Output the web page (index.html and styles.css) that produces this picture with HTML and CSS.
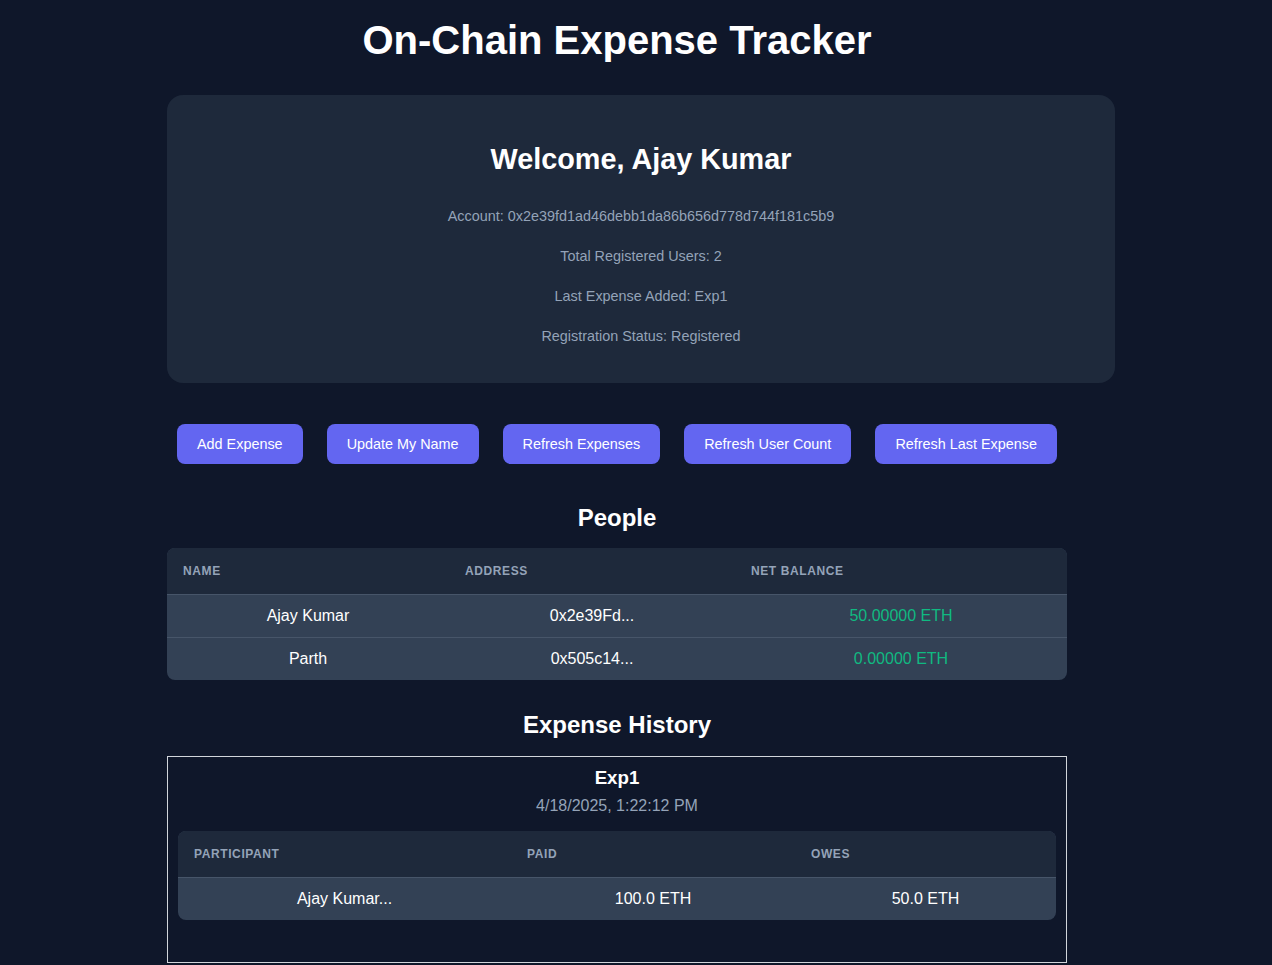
FILE: index.html
```html
<!DOCTYPE html>
<html lang="en">
<head>
<meta charset="utf-8">
<title>On-Chain Expense Tracker</title>
<link rel="stylesheet" href="styles.css">
</head>
<body>
<div class="app">
  <h1 class="title">On-Chain Expense Tracker</h1>

  <section class="card">
    <h2 class="welcome">Welcome, Ajay Kumar</h2>
    <p class="info">Account: 0x2e39fd1ad46debb1da86b656d778d744f181c5b9</p>
    <p class="info">Total Registered Users: 2</p>
    <p class="info">Last Expense Added: Exp1</p>
    <p class="info">Registration Status: Registered</p>
  </section>

  <div class="actions">
    <button class="btn">Add Expense</button>
    <button class="btn">Update My Name</button>
    <button class="btn">Refresh Expenses</button>
    <button class="btn">Refresh User Count</button>
    <button class="btn">Refresh Last Expense</button>
  </div>

  <h2 class="section-title people-title">People</h2>
  <table class="data-table people">
    <colgroup><col class="c1"><col class="c2"><col class="c3"></colgroup>
    <thead>
      <tr><th>Name</th><th>Address</th><th>Net Balance</th></tr>
    </thead>
    <tbody>
      <tr><td>Ajay Kumar</td><td>0x2e39Fd...</td><td class="pos">50.00000 ETH</td></tr>
      <tr><td>Parth</td><td>0x505c14...</td><td class="pos">0.00000 ETH</td></tr>
    </tbody>
  </table>

  <h2 class="section-title history-title">Expense History</h2>
  <div class="expense">
    <h3 class="expense-name">Exp1</h3>
    <p class="expense-date">4/18/2025, 1:22:12 PM</p>
    <table class="data-table parts">
      <colgroup><col class="p1"><col class="p2"><col class="p3"></colgroup>
      <thead>
        <tr><th>Participant</th><th>Paid</th><th>Owes</th></tr>
      </thead>
      <tbody>
        <tr><td>Ajay Kumar...</td><td>100.0 ETH</td><td>50.0 ETH</td></tr>
      </tbody>
    </table>
  </div>
</div>
</body>
</html>
```

FILE: styles.css
```css
* { box-sizing: border-box; }

html, body {
  margin: 0;
  padding: 0;
  background: #0f172a;
}

body {
  font-family: "Liberation Sans", Arial, sans-serif;
  color: #ffffff;
}

.app {
  width: 900px;
  margin-left: 167px;
  padding-top: 17px;
  padding-bottom: 40px;
}

.title {
  font-size: 40px;
  font-weight: 700;
  text-align: center;
  margin: 0 0 32px;
  line-height: 46px;
}

.card {
  width: 948px;
  background: #1e293b;
  border-radius: 16px;
  padding: 48px 24px 37px;
  text-align: center;
}

.welcome {
  font-size: 28.8px;
  font-weight: 700;
  margin: 0 0 31px;
  line-height: 32px;
}

.info {
  font-size: 14.4px;
  line-height: 20px;
  color: #94a3b8;
  margin: 0 0 20px;
}

.info:last-child { margin-bottom: 0; }

.actions {
  display: flex;
  justify-content: center;
  gap: 24px;
  margin-top: 41px;
}

.btn {
  font-family: "Liberation Sans", Arial, sans-serif;
  font-size: 14.4px;
  line-height: 16px;
  color: #ffffff;
  background: #6366f1;
  border: none;
  border-radius: 8px;
  padding: 12px 20px;
  height: 40px;
}

.section-title {
  font-size: 24px;
  font-weight: 700;
  text-align: center;
  line-height: 28px;
  margin: 0;
}

.people-title { margin: 40px 0 16px; }
.history-title { margin: 31px 0 17px; }

.data-table {
  width: 100%;
  border-collapse: separate;
  border-spacing: 0;
  table-layout: fixed;
  border-radius: 8px;
  overflow: hidden;
  background: #334155;
}

.data-table th {
  background: #1e293b;
  color: #94a3b8;
  font-size: 12px;
  line-height: 14px;
  font-weight: 700;
  letter-spacing: 0.05em;
  text-transform: uppercase;
  text-align: left;
  padding: 16px;
  border-bottom: 1px solid #475569;
}

.data-table td {
  font-size: 16px;
  line-height: 18px;
  text-align: center;
  padding: 12px 16px;
  color: #ffffff;
}

.data-table tbody tr + tr td { border-top: 1px solid #475569; }

.people .c1 { width: 282px; }
.people .c2 { width: 286px; }
.people .c3 { width: 332px; }

.data-table td.pos { color: #10b981; }

.expense {
  border: 1px solid #d1d5db;
  padding: 10px 10px 42px;
  text-align: center;
}

.expense-name {
  font-size: 18.72px;
  font-weight: 700;
  line-height: 21px;
  margin: 0;
}

.expense-date {
  color: #94a3b8;
  font-size: 16px;
  line-height: 18px;
  margin: 9px 0 16px;
}

.parts .p1 { width: 333px; }
.parts .p2 { width: 284px; }
.parts .p3 { width: 261px; }
```
